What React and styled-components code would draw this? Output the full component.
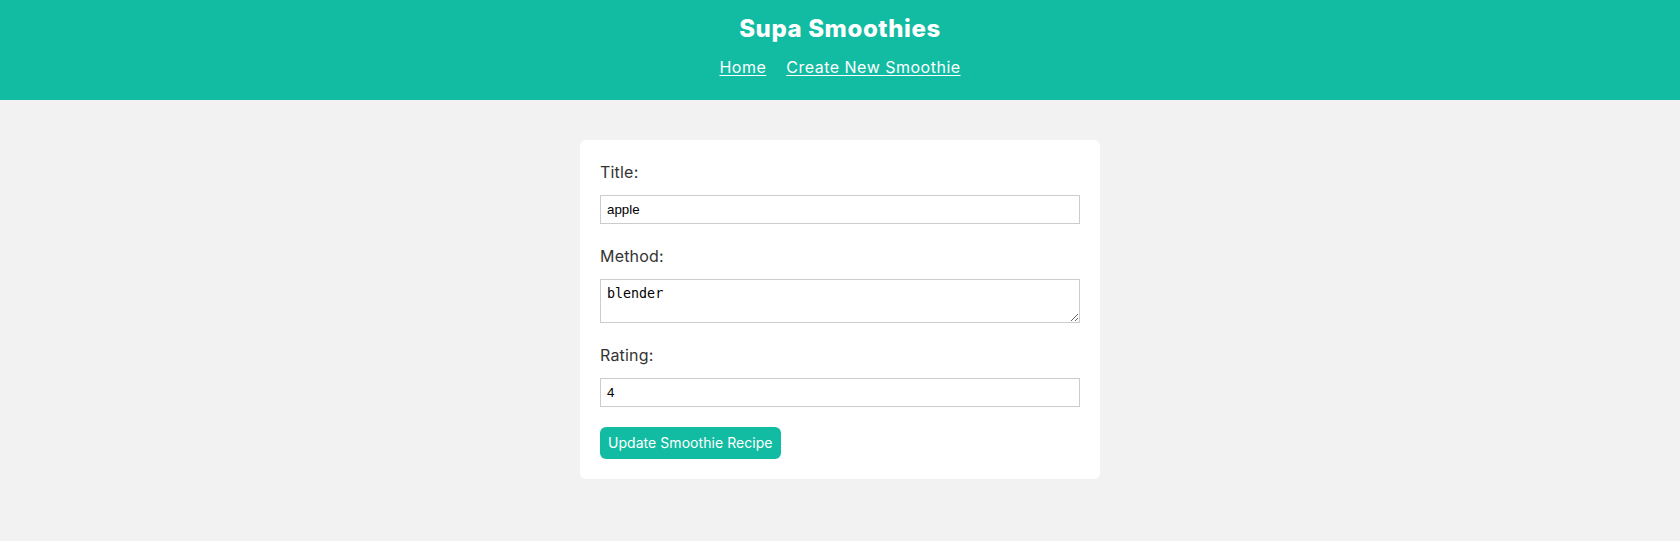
import React, { useState } from "react";
import styled, { createGlobalStyle } from "styled-components";

const GlobalStyle = createGlobalStyle`
  * {
    box-sizing: border-box;
  }
  body {
    margin: 0;
    background: #f2f2f2;
    font-family: Inter, "Open Sans", sans-serif;
    color: #333;
  }
`;

const Nav = styled.nav`
  display: flex;
  flex-wrap: wrap;
  justify-content: center;
  align-items: center;
  align-content: flex-start;
  height: 100px;
  padding: 11px 20px 0;
  background: #12bca2;
`;

const Brand = styled.h1`
  width: 100%;
  margin: 0 0 8px;
  text-align: center;
  font-size: 24px;
  line-height: 36px;
  font-weight: 800;
  letter-spacing: 0.6px;
  color: #fff;
`;

const NavLink = styled.a`
  margin: 0 10px;
  font-size: 16px;
  line-height: 24px;
  letter-spacing: 0.5px;
  color: #fff;
  text-decoration: underline;
  text-underline-offset: 2px;
`;

const Page = styled.div`
  max-width: 1200px;
  margin: 40px auto;
`;

const Form = styled.form`
  max-width: 520px;
  margin: 0 auto;
  padding: 20px;
  background: #fff;
  border-radius: 6px;
`;

const Label = styled.label`
  display: block;
  font-size: 16px;
  line-height: 25px;
  letter-spacing: 0.2px;
  color: #333;
`;

const Field = styled.input`
  display: block;
  width: 100%;
  margin: 10px 0 20px;
  padding: 6px;
  border: 1px solid #ccc;
  border-radius: 0;
  font: 13.33px/15px "Liberation Sans", Arial, sans-serif;
  color: #000;
  outline: none;
`;

const Area = styled.textarea`
  display: block;
  width: 100%;
  height: 44px;
  margin: 10px 0 20px;
  padding: 6px;
  border: 1px solid #ccc;
  border-radius: 0;
  font: 13.33px/15px "DejaVu Sans Mono", monospace;
  color: #000;
  outline: none;
`;

const Button = styled.button`
  display: block;
  padding: 6px 8px;
  border: 0;
  border-radius: 6px;
  background: #12bca2;
  color: #fff;
  font-family: Inter, "Open Sans", sans-serif;
  font-size: 14px;
  line-height: 20px;
  letter-spacing: 0.05px;
  cursor: pointer;
`;

export default function App() {
  const [title, setTitle] = useState("apple");
  const [method, setMethod] = useState("blender");
  const [rating, setRating] = useState("4");

  return (
    <>
      <GlobalStyle />
      <Nav>
        <Brand>Supa Smoothies</Brand>
        <NavLink href="#">Home</NavLink>
        <NavLink href="#">Create New Smoothie</NavLink>
      </Nav>
      <Page>
        <Form onSubmit={(e) => e.preventDefault()}>
          <Label htmlFor="title">Title:</Label>
          <Field
            id="title"
            type="text"
            value={title}
            onChange={(e) => setTitle(e.target.value)}
          />
          <Label htmlFor="method">Method:</Label>
          <Area
            id="method"
            value={method}
            onChange={(e) => setMethod(e.target.value)}
          />
          <Label htmlFor="rating">Rating:</Label>
          <Field
            id="rating"
            type="number"
            value={rating}
            onChange={(e) => setRating(e.target.value)}
          />
          <Button>Update Smoothie Recipe</Button>
        </Form>
      </Page>
    </>
  );
}
